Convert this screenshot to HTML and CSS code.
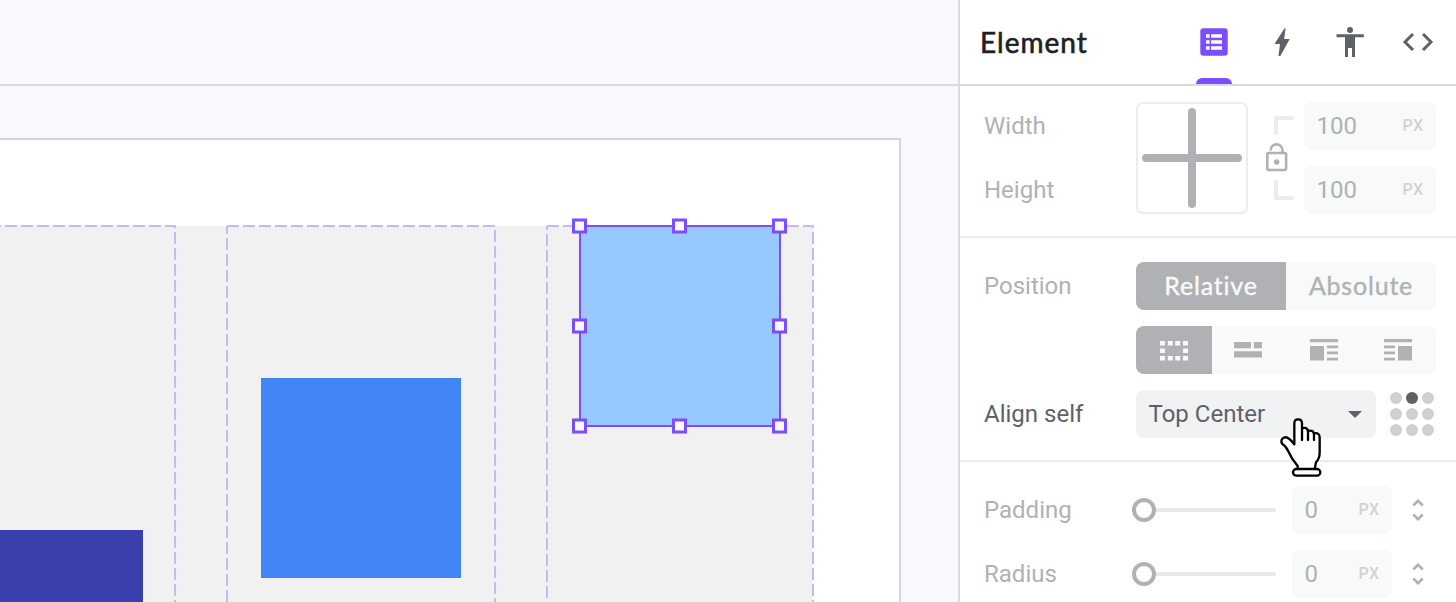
FILE: index.html
```html
<!DOCTYPE html>
<html lang="en">
<head>
<meta charset="utf-8">
<title>Element</title>
<link rel="stylesheet" href="styles.css">
</head>
<body>
<main class="workspace">
  <div class="toolbar"></div>
  <svg class="canvas" width="958" height="516" viewBox="0 86 958 516">
    <path class="page" d="M-5 139H900V610H-5Z"/>
    <rect class="grid-bg" x="0" y="226" width="813" height="400"/>
    <g class="guides">
      <path d="M-91 226H175V610"/>
      <path d="M227 226H495V610"/>
      <path d="M227 226V610" stroke-dashoffset="4"/>
      <path d="M547 226H813V610"/>
      <path d="M547 226V610" stroke-dashoffset="8"/>
    </g>
    <rect x="-57" y="530" width="200" height="200" fill="#3a3fad"/>
    <rect x="261" y="378" width="200" height="200" fill="#4285f7"/>
    <rect class="selected" x="580" y="226" width="200" height="200"/>
    <g class="handles">
      <rect x="573.500" y="220" width="12" height="12"/>
      <rect x="673.500" y="220" width="12" height="12"/>
      <rect x="773.500" y="220" width="12" height="12"/>
      <rect x="573.500" y="320" width="12" height="12"/>
      <rect x="773.500" y="320" width="12" height="12"/>
      <rect x="573.500" y="420" width="12" height="12"/>
      <rect x="673.500" y="420" width="12" height="12"/>
      <rect x="773.500" y="420" width="12" height="12"/>
    </g>
  </svg>
</main>
<aside class="panel">
  <header class="panel-head">
    <h1 class="title">Element</h1>
    <nav class="tabs">
      <span class="tab active"><svg width="36" height="36" viewBox="0 0 36 36"><rect x="4.3" y="4.3" width="27.4" height="27.4" rx="3" fill="#7c4dff"/><path fill="#fff" d="M10 10.2h3.6v3.6H10zM15 10.2h11v3.6H15zM10 16.2h3.6v3.6H10zM15 16.2h11v3.6H15zM10 22.2h3.6v3.6H10zM15 22.2h11v3.6H15z"/></svg></span>
      <span class="tab"><svg width="36" height="36" viewBox="0 0 36 36"><path d="M20.500 4.300 10.500 20H16l-1.500 12h1.800l9.400-17H20.200l1.300-10.700z"/></svg></span>
      <span class="tab"><svg width="36" height="36" viewBox="0 0 36 36"><circle cx="18" cy="6" r="3"/><path d="M4.500 10.200h27.300v3H23V33h-3v-9h-4v9h-3V13.200H4.500z"/></svg></span>
      <span class="tab"><svg width="36" height="36" viewBox="0 0 36 36"><path class="line" d="m13 10-8 8 8 8M23 10l8 8-8 8"/></svg></span>
    </nav>
  </header>

  <section class="section size">
    <div class="labels"><span>Width</span><span>Height</span></div>
    <div class="size-box"><i class="bar-v"></i><i class="bar-h"></i></div>
    <svg class="lock" width="56" height="112" viewBox="0 0 56 112"><path d="M44 16H28v15M28 80v16h16" stroke="#ebecee" stroke-width="4" stroke-linecap="round" fill="none"/><g fill="none" stroke="#b0b1b5" stroke-width="2.600"><rect x="19.300" y="51" width="18.800" height="17" rx="1.500"/><path d="M22.700 48.500c-.2-8.200 11.800-8.200 11.800 0v2"/></g><circle cx="28.700" cy="60" r="2.700" fill="#b0b1b5"/></svg>
    <div class="inputs"><div class="input"><span>100</span><small>PX</small></div><div class="input"><span>100</span><small>PX</small></div></div>
  </section>

  <section class="section">
    <div class="row">
      <span class="label">Position</span>
      <div class="segment"><span class="seg on">Relative</span><span class="seg">Absolute</span></div>
    </div>
    <div class="row">
      <span class="label"></span>
      <div class="segment icons">
        <span class="seg on"><svg width="28" height="24" viewBox="0 0 28 24"><path d="M0 3h5v4.500H0zM7.800 3h5v4.500h-5zM15.200 3h5v4.500h-5zM23 3h5v4.500h-5zM0 10.500h5V15H0zM23 10.500h5V15h-5zM0 18h5v4.500H0zM7.800 18h5v4.500h-5zM15.200 18h5v4.500h-5zM23 18h5v4.500h-5z"/></svg></span>
        <span class="seg"><svg width="28" height="24" viewBox="0 0 28 24"><path d="M0 4h17v6.300H0zM19.800 4H28v6.300h-8.200zM0 13.200h28v6.300H0z"/></svg></span>
        <span class="seg"><svg width="28" height="24" viewBox="0 0 28 24"><path d="M0 1h28v3.300H0zM0 8h14v14.500H0zM17 7.500h11v2.800H17zM17 13.500h11v2.800H17zM17 19.700h11v2.800H17z"/></svg></span>
        <span class="seg"><svg width="28" height="24" viewBox="0 0 28 24"><path d="M0 1h28v3.300H0zM14 8h14v14.500H14zM0 7.500h11v2.800H0zM0 13.500h11v2.800H0zM0 19.700h11v2.800H0z"/></svg></span>
      </div>
    </div>
    <div class="row">
      <span class="label strong">Align self</span>
      <div class="select"><span>Top Center</span><i class="caret"></i></div>
      <div class="dots"><i></i><i class="on"></i><i></i><i></i><i></i><i></i><i></i><i></i><i></i></div>
    </div>
  </section>

  <section class="section last">
    <div class="row">
      <span class="label">Padding</span>
      <div class="slider"><i class="knob"></i><i class="track"></i></div>
      <div class="input narrow"><span>0</span><small>PX</small></div>
      <svg class="stepper" width="12" height="22" viewBox="0 0 12 22"><path d="M1.300 6.500 6 1.800l4.700 4.700M1.300 15.500 6 20.200l4.700-4.700"/></svg>
    </div>
    <div class="row">
      <span class="label">Radius</span>
      <div class="slider"><i class="knob"></i><i class="track"></i></div>
      <div class="input narrow"><span>0</span><small>PX</small></div>
      <svg class="stepper" width="12" height="22" viewBox="0 0 12 22"><path d="M1.300 6.500 6 1.800l4.700 4.700M1.300 15.500 6 20.200l4.700-4.700"/></svg>
    </div>
  </section>
</aside>
<svg class="cursor" width="65" height="75" viewBox="0 0 195 225"><path d="M73 103V40Q73 28 84 28Q96 28 96 40V55Q111 50 114 63Q128 59 132 70Q149 67 149 83V128Q149 145 138 157L134 178H83V168Q64 145 54 122Q47 107 36 101Q30 86 44 82Q55 79 73 103Z"/><path d="M96 54V90M114 62V90M132 70V90"/><rect x="69" y="177" width="82" height="20" rx="10"/></svg>
</body>
</html>
```

FILE: styles.css
```css
* { box-sizing: border-box; }
body {
  margin: 0;
  width: 1456px;
  height: 602px;
  overflow: hidden;
  display: flex;
  position: relative;
  background: #fff;
  color: #b0b1b5;
  font: 24px/28px Roboto, sans-serif;
}
svg { display: block; flex: none; }
i { display: block; }

.workspace { width: 958px; background: #f8f9fc; }
.toolbar { height: 86px; border-bottom: 2px solid #dadbe0; }
.page { fill: #fff; stroke: #d5d6db; stroke-width: 2; }
.grid-bg { fill: #f1f1f1; }
.guides { fill: none; stroke: #c7b8fa; stroke-width: 2; stroke-dasharray: 12 4; }
.selected { fill: #97c8ff; stroke: #7c4dff; stroke-width: 2; }
.handles { fill: #f8f9fc; stroke: #7c4dff; stroke-width: 3; }

.panel { width: 498px; border-left: 2px solid #dadbe0; background: #fff; }
.panel-head {
  height: 86px;
  padding: 0 20px;
  display: flex;
  justify-content: space-between;
  border-bottom: 2px solid #dadbe0;
}
.title {
  margin: 0;
  font: 400 28px/84px Lato, sans-serif;
  letter-spacing: 1px;
  color: #202124;
  -webkit-text-stroke: .6px #202124;
}
.tabs { display: flex; gap: 32px; }
.tab { width: 36px; height: 84px; padding-top: 24px; fill: #5f6168; }
.tab.active::after {
  content: "";
  display: block;
  height: 6px;
  margin-top: 18px;
  border-radius: 6px 6px 0 0;
  background: #7c4dff;
}
.line { fill: none; stroke: #5f6168; stroke-width: 3; }

.section {
  padding: 24px 20px 22px 24px;
  display: flex;
  flex-direction: column;
  gap: 16px;
  border-bottom: 2px solid #ebebed;
}
.section.size { flex-direction: row; gap: 0; padding-top: 16px; }
.section.last { border: 0; padding-bottom: 0; }
.labels { width: 152px; display: grid; gap: 16px; line-height: 48px; }
.size-box {
  width: 112px;
  height: 112px;
  border: 2px solid #ededee;
  border-radius: 7px;
  display: grid;
  place-items: center;
}
.bar-v, .bar-h { grid-area: 1 / 1; background: #b0b1b5; border-radius: 4px; }
.bar-v { width: 8px; height: 100px; }
.bar-h { width: 100px; height: 8px; }
.inputs { display: grid; gap: 16px; }
.input {
  width: 132px;
  height: 48px;
  padding: 0 12px 0 12.5px;
  display: flex;
  align-items: center;
  justify-content: space-between;
  border-radius: 8px;
  background: #f8faf9;
}
.input small { font-size: 16px; font-weight: 500; letter-spacing: .8px; color: #d0d2d3; }

.row { height: 48px; display: flex; align-items: center; }
.label { width: 152px; }
.strong { color: #5f6168; }
.segment {
  width: 300px;
  height: 48px;
  display: grid;
  grid-template-columns: 150px 150px;
  border-radius: 8px;
  overflow: hidden;
  background: #f8faf9;
  font: 400 25px/46px Lato, sans-serif;
  letter-spacing: .8px;
}
.segment.icons { grid-template-columns: 76px 72px 80px 68px; }
.seg { height: 48px; padding-bottom: 2px; display: flex; align-items: center; justify-content: center; fill: #b0b1b5; -webkit-text-stroke: .4px; }
.icons .seg { padding-bottom: 0; }
.seg.on { background: #b0b1b5; color: #f8faf9; fill: #f8faf9; }
.select {
  width: 240px;
  height: 48px;
  padding: 0 14px 0 12.5px;
  display: flex;
  align-items: center;
  justify-content: space-between;
  border-radius: 8px;
  background: #f1f2f4;
  color: #5f6168;
}
.caret { margin-top: 1px; border: solid transparent; border-width: 7.500px 7.500px 0; border-top-color: #5f6168; }
.dots { margin-left: 14px; display: grid; grid-template-columns: repeat(3, 12px); gap: 4px; }
.dots i { width: 12px; height: 12px; border-radius: 50%; background: #cfd0d2; }
.dots .on { background: #5f6168; }

.slider { width: 144px; margin-left: -4px; display: flex; align-items: center; }
.knob { width: 24px; height: 24px; border: 4px solid #b0b1b5; border-radius: 50%; }
.track { width: 120px; height: 4px; border-radius: 0 2px 2px 0; background: #e6e9e8; }
.input.narrow { width: 100px; margin-left: 16px; }
.stepper { margin-left: 20px; fill: none; stroke: #b0b1b5; stroke-width: 2.600; }

.cursor { position: absolute; left: 1270px; top: 410px; fill: #fff; stroke: #000; stroke-width: 7; stroke-linejoin: round; stroke-linecap: round; }
```
